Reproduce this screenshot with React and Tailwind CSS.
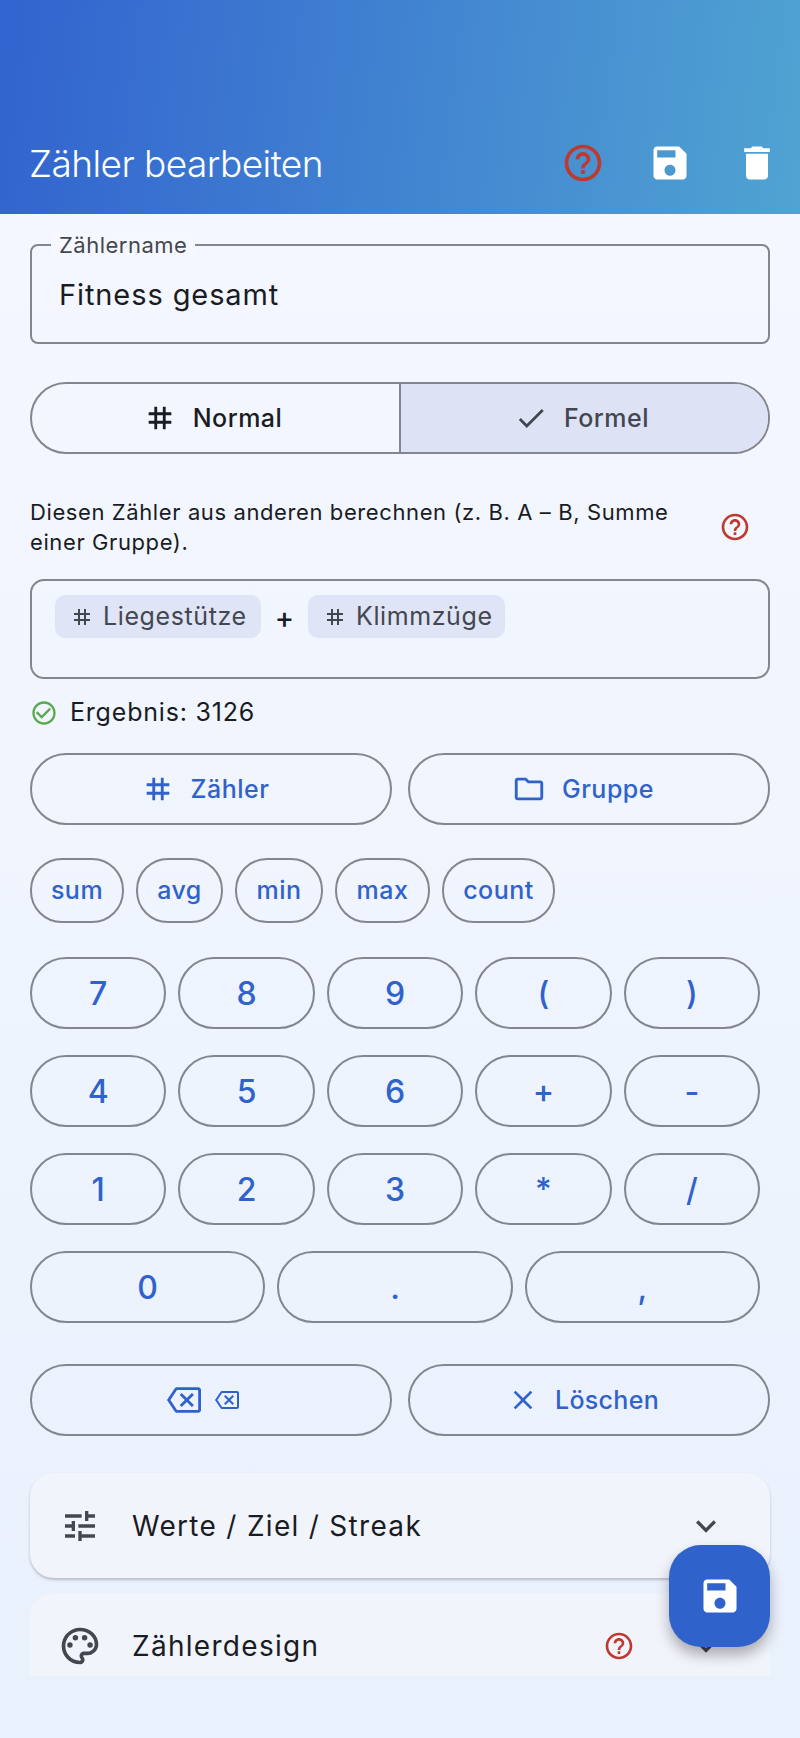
import React from 'react';

const paths = {
  help: 'M11 18h2v-2h-2v2zm1-16C6.48 2 2 6.48 2 12s4.48 10 10 10 10-4.48 10-10S17.52 2 12 2zm0 18c-4.41 0-8-3.59-8-8s3.59-8 8-8 8 3.59 8 8-3.59 8-8 8zm0-14c-2.21 0-4 1.79-4 4h2c0-1.1.9-2 2-2s2 .9 2 2c0 2-3 1.75-3 5h2c0-2.25 3-2.5 3-5 0-2.21-1.79-4-4-4z',
  save: 'M17 3H5c-1.11 0-2 .9-2 2v14c0 1.1.89 2 2 2h14c1.1 0 2-.9 2-2V7l-4-4zm-5 16c-1.66 0-3-1.34-3-3s1.34-3 3-3 3 1.34 3 3-1.34 3-3 3zm3-10H5V5h10v4z',
  trash: 'M6 19c0 1.1.9 2 2 2h8c1.1 0 2-.9 2-2V7H6v12zM19 4h-3.5l-1-1h-5l-1 1H5v2h14V4z',
  tag: 'M20 10V8h-4V4h-2v4h-4V4H8v4H4v2h4v4H4v2h4v4h2v-4h4v4h2v-4h4v-2h-4v-4h4zm-6 4h-4v-4h4v4z',
  check: 'M9 16.17L4.83 12l-1.42 1.41L9 19 21 7l-1.41-1.41z',
  checkCircle: 'M16.59 7.58L10 14.17l-3.59-3.58L5 12l5 5 8-8zM12 2C6.48 2 2 6.48 2 12s4.48 10 10 10 10-4.48 10-10S17.52 2 12 2zm0 18c-4.42 0-8-3.58-8-8s3.58-8 8-8 8 3.58 8 8-3.58 8-8 8z',
  folder: 'M20 6h-8l-2-2H4c-1.1 0-1.99.9-1.99 2L2 18c0 1.1.9 2 2 2h16c1.1 0 2-.9 2-2V8c0-1.1-.9-2-2-2zm0 12H4V6h5.17l2 2H20v10z',
  backspace: 'M22 3H7c-.69 0-1.23.35-1.59.88L0 12l5.41 8.11c.36.53.9.89 1.59.89h15c1.1 0 2-.9 2-2V5c0-1.1-.9-2-2-2zm0 16H7.07L2.4 12l4.66-7H22v14zm-11.59-2L14 13.41 17.59 17 19 15.59 15.41 12 19 8.41 17.59 7 14 10.59 10.41 7 9 8.41 12.59 12 9 15.59z',
  close: 'M19 6.41L17.59 5 12 10.59 6.41 5 5 6.41 10.59 12 5 17.59 6.41 19 12 13.41 17.59 19 19 17.59 13.41 12 19 6.41z',
  tune: 'M3 17v2h6v-2H3zM3 5v2h10V5H3zm10 16v-2h8v-2h-8v-2h-2v6h2zM7 9v2H3v2h4v2h2V9H7zm14 4v-2H11v2h10zm-6-4h2V7h4V5h-4V3h-2v6z',
  palette: 'M12 22C6.49 22 2 17.51 2 12S6.49 2 12 2s10 4.04 10 9c0 3.31-2.69 6-6 6h-1.77c-.28 0-.5.22-.5.5 0 .12.05.23.13.33.41.47.64 1.06.64 1.67 0 1.38-1.12 2.5-2.5 2.5zm0-18c-4.41 0-8 3.59-8 8s3.59 8 8 8c.28 0 .5-.22.5-.5 0-.16-.08-.28-.14-.35-.41-.46-.63-1.05-.63-1.65 0-1.38 1.12-2.5 2.5-2.5H16c2.21 0 4-1.79 4-4 0-3.86-3.59-7-8-7z',
  expand: 'M16.59 8.59L12 13.17 7.41 8.59 6 10l6 6 6-6z',
};

const Icon = ({ name, className }) => (
  <svg viewBox="0 0 24 24" fill="currentColor" className={className}>
    <path d={paths[name]} />
    {name === 'palette' && (
      <>
        <circle cx="6.5" cy="11.5" r="1.5" />
        <circle cx="9.5" cy="7.5" r="1.5" />
        <circle cx="14.5" cy="7.5" r="1.5" />
        <circle cx="17.5" cy="11.5" r="1.5" />
      </>
    )}
  </svg>
);

const Key = ({ children, className = '' }) => (
  <button className={`h-[72px] flex items-center justify-center border-2 border-[#83868e] rounded-[36px] text-[#3062cc] font-medium ${className}`}>
    {children}
  </button>
);

const row1 = ['7', '8', '9', '(', ')'];
const row2 = ['4', '5', '6', '+', '-'];
const row3 = ['1', '2', '3', '*', '/'];
const row4 = ['0', '.', ','];
const funcs = [
  { label: 'sum', w: 'w-[94px]' },
  { label: 'avg', w: 'w-[87px]' },
  { label: 'min', w: 'w-[88px]' },
  { label: 'max', w: 'w-[95px]' },
  { label: 'count', w: 'w-[113px]' },
];

const Chip = ({ label, className }) => (
  <div className={`h-[43px] flex items-center gap-[9px] pl-[15px] bg-[#dfe4f6] rounded-[10px] text-[25px] text-[#44474f] tracking-[0.6px] ${className}`}>
    <Icon name="tag" className="w-[24px] h-[24px]" />
    {label}
  </div>
);

export default function App() {
  return (
    <div className="w-[800px] h-[1738px] flex flex-col bg-gradient-to-b from-[#f6f8ff] to-[#e9f1fd] font-['Inter',sans-serif] text-[#1a1c24]">
      <header className="h-[214px] shrink-0 flex items-end bg-[linear-gradient(97deg,#3263cf,#50a3d2)]">
        <div className="w-full h-[100px] flex items-center pl-[29px] pr-[21px]">
          <h1 className="flex-1 text-[37px] font-light text-white tracking-[-0.55px]">Zähler bearbeiten</h1>
          <div className="flex items-center gap-[43px] -translate-y-[1px]">
            <Icon name="help" className="w-[44px] h-[44px] text-[#c0392f]" />
            <Icon name="save" className="w-[44px] h-[44px] text-white" />
            <Icon name="trash" className="w-[44px] h-[44px] text-white" />
          </div>
        </div>
      </header>

      <main className="relative h-[1462px] shrink-0 overflow-hidden px-[30px] pt-[30px]">
        <div className="relative h-[100px] border-2 border-[#83868e] rounded-[8px] flex items-center pl-[27px] pt-[2px] text-[29px] tracking-[0.9px]">
          <span className="absolute left-[19px] -top-[13px] bg-[#f6f8ff] px-[8px] text-[22px] leading-[24px] tracking-[0.5px] text-[#44474f]">Zählername</span>
          Fitness gesamt
        </div>

        <div className="mt-[38px] h-[72px] flex border-2 border-[#83868e] rounded-[36px] overflow-hidden text-[25px] tracking-[0.5px] font-medium">
          <div className="flex-1 flex items-center justify-center gap-[16px] pr-[6px] border-r-2 border-[#83868e]">
            <Icon name="tag" className="w-[34px] h-[34px]" />
            <span className="pt-[2px]">Normal</span>
          </div>
          <div className="flex-1 flex items-center justify-center gap-[16px] pr-[6px] bg-[#dde2f4] text-[#44474f]">
            <Icon name="check" className="w-[34px] h-[34px]" />
            <span className="pt-[2px]">Formel</span>
          </div>
        </div>

        <div className="mt-[43px] flex items-center">
          <p className="w-[660px] text-[22px] leading-[30px] tracking-[0.6px]">Diesen Zähler aus anderen berechnen (z. B. A – B, Summe einer Gruppe).</p>
          <Icon name="help" className="ml-[29px] w-[32px] h-[32px] text-[#c0392f]" />
        </div>

        <div className="mt-[22px] h-[100px] border-2 border-[#83868e] rounded-[14px] flex items-start pl-[23px] pt-[14px]">
          <Chip label="Liegestütze" className="w-[206px]" />
          <span className="w-[47px] h-[43px] flex items-center justify-center pt-[2px] text-[29px] font-medium">+</span>
          <Chip label="Klimmzüge" className="w-[197px]" />
        </div>

        <div className="mt-[22px] h-[24px] flex items-center gap-[12px] text-[25px] tracking-[0.8px]">
          <Icon name="checkCircle" className="w-[28px] h-[28px] text-[#5aa84f] shrink-0" />
          Ergebnis: 3126
        </div>

        <div className="mt-[28px] grid grid-cols-2 gap-[16px]">
          <Key className="gap-[16px] pr-[12px] text-[25px] tracking-[0.5px]">
            <Icon name="tag" className="w-[34px] h-[34px]" />
            <span className="pt-[2px]">Zähler</span>
          </Key>
          <Key className="gap-[16px] pr-[12px] text-[25px] tracking-[0.5px]">
            <Icon name="folder" className="w-[34px] h-[34px]" />
            <span className="pt-[2px]">Gruppe</span>
          </Key>
        </div>

        <div className="mt-[33px] flex gap-[12px]">
          {funcs.map((f) => (
            <button key={f.label} className={`${f.w} h-[65px] flex items-center justify-center border-2 border-[#83868e] rounded-[32px] text-[#3062cc] text-[25px] font-medium tracking-[0.5px]`}>
              {f.label}
            </button>
          ))}
        </div>

        <div className="mt-[34px] w-[730px] flex flex-col gap-[26px] text-[32px]">
          {[row1, row2, row3].map((row) => (
            <div key={row[0]} className="grid grid-cols-5 gap-[12px]">
              {row.map((k) => <Key key={k} className="pt-[1px]">{k}</Key>)}
            </div>
          ))}
          <div className="grid grid-cols-3 gap-[12px]">
            {row4.map((k) => <Key key={k} className="pt-[1px]">{k}</Key>)}
          </div>
        </div>

        <div className="mt-[41px] grid grid-cols-2 gap-[16px]">
          <Key className="gap-[14px] pr-[16px]">
            <Icon name="backspace" className="w-[34px] h-[34px]" />
            <Icon name="backspace" className="w-[24px] h-[24px]" />
          </Key>
          <Key className="gap-[16px] pr-[12px] text-[25px] tracking-[0.3px]">
            <Icon name="close" className="w-[32px] h-[32px]" />
            <span className="pt-[2px]">Löschen</span>
          </Key>
        </div>

        <div className="mt-[37px] h-[105px] flex items-center pl-[30px] pr-[44px] bg-[#f2f4fc] rounded-[24px] shadow-[0_2px_3px_rgba(0,0,0,0.22)] text-[28px] tracking-[1.3px]">
          <Icon name="tune" className="w-[40px] h-[40px] text-[#44474f] shrink-0" />
          <span className="flex-1 ml-[32px]">Werte / Ziel / Streak</span>
          <Icon name="expand" className="w-[40px] h-[40px] text-[#44474f]" />
        </div>

        <div className="mt-[15px] h-[105px] flex items-center pl-[30px] pr-[44px] bg-[#f2f4fc] rounded-[24px] text-[28px] tracking-[1.3px]">
          <Icon name="palette" className="w-[44px] h-[44px] text-[#44474f] shrink-0 -ml-[2px]" />
          <span className="flex-1 ml-[30px]">Zählerdesign</span>
          <Icon name="help" className="w-[32px] h-[32px] text-[#c0392f] mr-[51px]" />
          <Icon name="expand" className="w-[40px] h-[40px] text-[#44474f]" />
        </div>

        <button className="absolute left-[669px] top-[1331px] w-[101px] h-[102px] flex items-center justify-center bg-[#3062cc] rounded-[32px] shadow-[0_8px_14px_rgba(0,0,0,0.3)] text-white">
          <Icon name="save" className="w-[44px] h-[44px]" />
        </button>
      </main>
    </div>
  );
}
